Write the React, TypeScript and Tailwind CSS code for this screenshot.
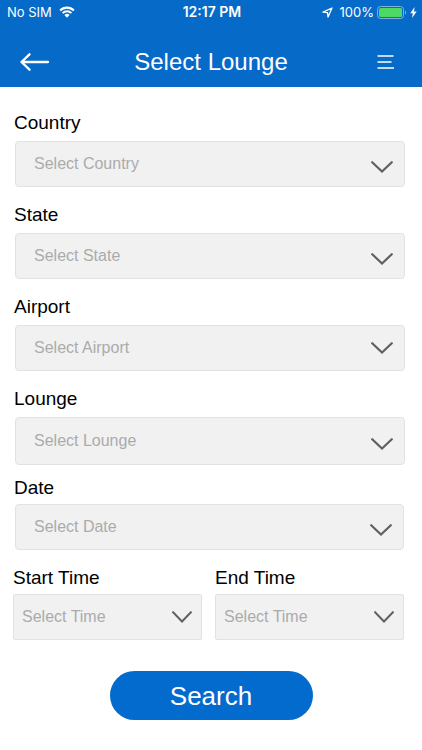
import React, { useState } from "react";
import clsx from "clsx";

type SelectFieldProps = {
  id: string;
  label: string;
  placeHolder: string;
  options: string[];
  variant?: "default" | "time";
  tall?: boolean;
  compact?: boolean;
  lowChevron?: boolean;
};

const countryOptions = ["India", "Singapore", "United Kingdom"];
const stateOptions = ["Delhi", "Karnataka", "Maharashtra"];
const airportOptions = ["Terminal 1", "Terminal 2", "Terminal 3"];
const loungeOptions = ["Business Lounge", "First Class Lounge"];
const dateOptions = ["Today", "Tomorrow"];
const timeOptions = ["09:00 AM", "12:00 PM", "03:00 PM", "06:00 PM"];

const Chevron = ({ small }: { small?: boolean }) => (
  <svg
    className={small ? "h-3 w-5" : "h-3 w-[22px]"}
    viewBox="0 0 22 12"
    fill="none"
    stroke="#606062"
    strokeWidth="2.2"
    strokeLinecap="round"
    strokeLinejoin="miter"
    preserveAspectRatio="none"
  >
    <path d="M1.2 1.2L11 10.5L20.8 1.2" />
  </svg>
);

const SelectField = ({
  id,
  label,
  placeHolder,
  options,
  variant = "default",
  tall,
  compact,
  lowChevron,
}: SelectFieldProps) => {
  const [value, setValue] = useState("");
  const isTime = variant === "time";

  return (
    <div className={clsx("flex flex-col", compact ? "gap-1" : "gap-1.5")}>
      <label
        className={clsx(
          "block text-[19px] leading-6 text-black",
          !isTime && "-ml-px"
        )}
        htmlFor={id}
      >
        {label}
      </label>
      <div className="relative">
        <select
          id={id}
          value={value}
          onChange={(e) => setValue(e.target.value)}
          className={clsx(
            "block w-full appearance-none border border-[#e2e2e2] bg-[#f1f1f1] text-base outline-none",
            isTime ? "rounded-xs pl-2 pr-8" : "rounded pl-[18px] pr-12",
            tall ? "h-12" : "h-[46px]",
            value ? "text-black" : "text-[#ababab]"
          )}
        >
          <option value="">{placeHolder}</option>
          {options.map((option) => (
            <option key={option} value={option}>
              {option}
            </option>
          ))}
        </select>
        <span
          className={clsx(
            "pointer-events-none absolute inset-y-0 flex items-center",
            isTime ? "right-[10px]" : "right-3",
            lowChevron && "pt-[6px]"
          )}
        >
          <Chevron small={isTime} />
        </span>
      </div>
    </div>
  );
};

const StatusBar = () => (
  <div className="grid h-6 grid-cols-[1fr_auto_1fr] items-center pl-[7px] pr-[5px] font-['Inter',sans-serif] text-[13px] leading-4">
    <div className="flex items-center gap-[7px]">
      <span>No SIM</span>
      <svg className="h-3 w-4" viewBox="0 0 16 12" fill="none">
        <path
          d="M1.1 4.5a9.8 9.8 0 0 1 13.8 0"
          stroke="white"
          strokeWidth="2.1"
        />
        <path
          d="M3.6 7.1a6.2 6.2 0 0 1 8.8 0"
          stroke="white"
          strokeWidth="2"
        />
        <path d="M8 11.8L5.4 9.1a3.7 3.7 0 0 1 5.2 0z" fill="white" />
      </svg>
    </div>
    <span className="text-sm font-semibold leading-4">12:17 PM</span>
    <div className="flex items-center justify-end">
      <svg className="mr-[7px] size-[11px]" viewBox="0 0 11 11" fill="none">
        <path
          d="M10 1L1 5.2l4.5.4L6 10z"
          stroke="white"
          strokeWidth="1.3"
          strokeLinejoin="round"
        />
      </svg>
      <span className="mr-[3px]">100%</span>
      <svg className="mr-[3px] h-[13px] w-[30px]" viewBox="0 0 30 13">
        <rect
          x="0.5"
          y="0.5"
          width="26"
          height="12"
          rx="3"
          fill="none"
          stroke="#7fb0e3"
        />
        <rect x="2" y="2" width="23" height="9" rx="1.5" fill="#4cd964" />
        <path d="M28 4.5c1.6.5 1.6 3.5 0 4z" fill="#7fb0e3" />
      </svg>
      <svg className="h-[11px] w-[7px]" viewBox="0 0 7 11" fill="white">
        <path d="M4.6 0L0.3 6.2h2.5L2 11l4.7-6.5H4z" />
      </svg>
    </div>
  </div>
);

const Header = () => (
  <header className="bg-[#056ac8] text-white">
    <StatusBar />
    <div className="grid h-[63px] grid-cols-[1fr_auto_1fr] items-center px-5 pt-3">
      <button type="button" aria-label="Back" className="w-[30px]">
        <svg
          className="h-[18px] w-[30px]"
          viewBox="0 0 30 18"
          fill="none"
          stroke="white"
          strokeWidth="2.3"
          strokeLinecap="round"
          strokeLinejoin="round"
        >
          <path d="M9.5 1.3L1.5 9L9.5 16.7M1.5 9H28" />
        </svg>
      </button>
      <h1 className="text-2xl leading-8">Select Lounge</h1>
      <button
        type="button"
        aria-label="Menu"
        className="mr-[7px] w-[18px] justify-self-end"
      >
        <svg
          className="h-[14px] w-[18px]"
          viewBox="0 0 18 14"
          fill="none"
          stroke="white"
          strokeWidth="1.4"
        >
          <path d="M0.5 1H16.5M0.5 7H14.5M0.5 13H17" />
        </svg>
      </button>
    </div>
  </header>
);

const App = () => {
  return (
    <main className="min-h-screen bg-white font-['Liberation_Sans',Arial,sans-serif]">
      <Header />
      <form
        className="flex flex-col pb-7 pt-6"
        onSubmit={(e) => e.preventDefault()}
      >
        <div className="flex flex-col gap-4 pl-[15px] pr-[17px]">
          <SelectField
            id="country"
            label="Country"
            placeHolder="Select Country"
            options={countryOptions}
            lowChevron
          />
          <SelectField
            id="state"
            label="State"
            placeHolder="Select State"
            options={stateOptions}
            lowChevron
          />
          <SelectField
            id="airport"
            label="Airport"
            placeHolder="Select Airport"
            options={airportOptions}
          />
          <SelectField
            id="lounge"
            label="Lounge"
            placeHolder="Select Lounge"
            options={loungeOptions}
            tall
            lowChevron
          />
        </div>

        <div className="mt-[11px] pl-[15px] pr-[18px]">
          <SelectField
            id="date"
            label="Date"
            placeHolder="Select Date"
            options={dateOptions}
            compact
            lowChevron
          />
        </div>

        <div className="mt-4 grid grid-cols-2 gap-[13px] pl-[13px] pr-[18px]">
          <SelectField
            id="startTime"
            label="Start Time"
            placeHolder="Select Time"
            options={timeOptions}
            variant="time"
            compact
          />
          <SelectField
            id="endTime"
            label="End Time"
            placeHolder="Select Time"
            options={timeOptions}
            variant="time"
            compact
          />
        </div>

        <button
          type="submit"
          className="mx-auto mt-[31px] h-[49px] w-[203px] rounded-full bg-[#046bce] text-[26px] leading-8 text-white"
        >
          Search
        </button>
      </form>
    </main>
  );
};

export default App;
